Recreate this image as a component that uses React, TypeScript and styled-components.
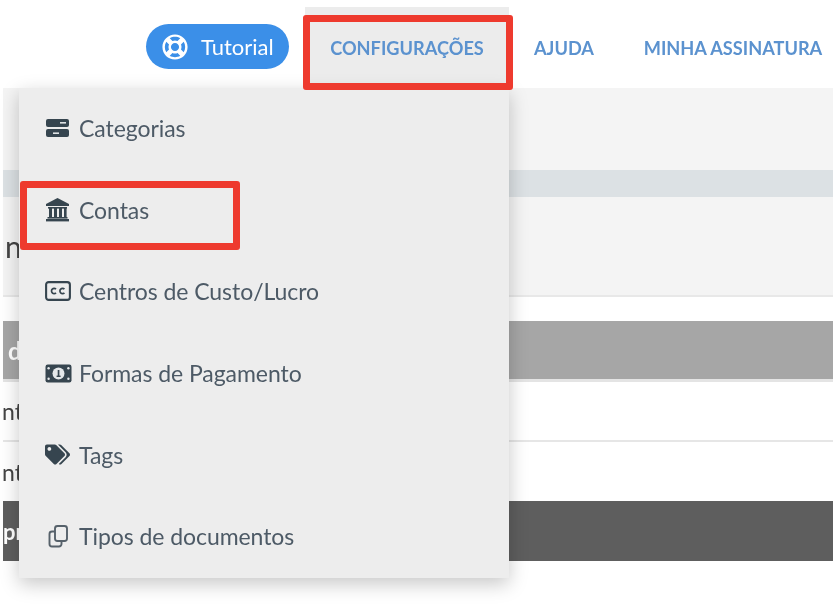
import React from 'react';
import styled, { createGlobalStyle } from 'styled-components';
import { FaTags, FaRegLifeRing } from 'react-icons/fa';

const Global = createGlobalStyle`
  html, body { margin: 0; padding: 0; background: #fff; }
  body { font-family: Lato, "Open Sans", sans-serif; }
`;

const Page = styled.div`
  position: relative;
  width: 839px;
  height: 604px;
  overflow: hidden;
  background: #fff;
  filter: blur(0.5px);
`;

const Nav = styled.nav`
  height: 88px;
  display: flex;
  align-items: flex-end;
  padding-left: 146px;
`;

const TutorialPill = styled.a`
  width: 143px;
  height: 45px;
  flex: none;
  margin-bottom: 19px;
  margin-right: 16px;
  border-radius: 23px;
  background: #3b8fe8;
  color: #fff;
  font-size: 22px;
  display: flex;
  align-items: center;
  box-sizing: border-box;
  padding-left: 16px;
  gap: 13px;
`;

const NavLink = styled.a<{ $active?: boolean; $width: number }>`
  width: ${p => p.$width}px;
  height: 81px;
  flex: none;
  display: flex;
  align-items: center;
  justify-content: center;
  background: ${p => (p.$active ? '#ececec' : 'transparent')};
  color: #5b92cf;
  font-size: 18.2px;
  font-weight: 700;
  white-space: nowrap;
`;

const Band = styled.div<{ $h: number; $bg: string; $line?: string; $lineW?: number }>`
  margin: 0 6px 0 3px;
  height: ${p => p.$h}px;
  background: ${p => p.$bg};
  box-sizing: border-box;
  border-bottom: ${p => (p.$line ? `${p.$lineW ?? 2}px solid ${p.$line}` : 'none')};
  display: flex;
  align-items: center;
  overflow: hidden;
`;

const Clip = styled.span<{ $light?: boolean; $left?: number; $size?: number }>`
  margin-left: ${p => p.$left ?? 0}px;
  font-size: ${p => p.$size ?? 24}px;
  font-weight: ${p => (p.$light ? 700 : 400)};
  color: ${p => (p.$light ? '#fff' : '#444')};
`;

const Menu = styled.ul`
  position: absolute;
  left: 19px;
  top: 88px;
  width: 490px;
  height: 490px;
  margin: 0;
  padding: 0;
  list-style: none;
  background: #ededed;
  box-shadow: 0 6px 18px rgba(0, 0, 0, 0.22);
  display: grid;
  grid-auto-rows: 81.6px;
`;

const MenuItem = styled.li`
  display: flex;
  align-items: center;
  padding-left: 26px;
  padding-bottom: 1px;
  color: #4d5a66;
  font-size: 23px;
  letter-spacing: -0.06px;
  white-space: nowrap;
`;

const IconSlot = styled.span`
  width: 34px;
  flex: none;
  display: flex;
  align-items: center;
  color: #36454f;
`;

const Annotation = styled.div<{ $l: number; $t: number; $w: number; $h: number }>`
  position: absolute;
  left: ${p => p.$l}px;
  top: ${p => p.$t}px;
  width: ${p => p.$w}px;
  height: ${p => p.$h}px;
  box-sizing: border-box;
  border: 7px solid #ee3a2e;
  border-radius: 3px;
`;

const SlabsIcon = () => (
  <svg width="25" height="20" viewBox="0 0 25 20">
    <rect x="1" y="1" width="23" height="8" rx="2" fill="currentColor" />
    <rect x="1" y="11" width="23" height="8" rx="2" fill="currentColor" />
    <rect x="15" y="4" width="6" height="1.6" fill="#dfe3e5" />
    <rect x="8" y="14.4" width="6" height="1.6" fill="#dfe3e5" />
  </svg>
);

const BankIcon = () => (
  <svg width="25" height="25" viewBox="0 0 25 25">
    <path d="M12.5 1 L24 7 V9 H1 V7 Z" fill="currentColor" />
    <rect x="3" y="10" width="19" height="1.6" fill="currentColor" />
    <rect x="4" y="11" width="3" height="9" fill="currentColor" />
    <rect x="9" y="11" width="3" height="9" fill="currentColor" />
    <rect x="14" y="11" width="3" height="9" fill="currentColor" />
    <rect x="19" y="11" width="2.6" height="9" fill="currentColor" />
    <rect x="2.5" y="20" width="20" height="1.6" fill="currentColor" />
    <rect x="1" y="22" width="23" height="2.4" fill="currentColor" />
  </svg>
);

const CaptionIcon = () => (
  <svg width="26" height="20" viewBox="0 0 26 20" fill="none" stroke="currentColor">
    <rect x="1.1" y="1.1" width="23.8" height="17.8" rx="2.6" strokeWidth="2.1" />
    <path d="M11 8.2 A2.6 2.6 0 1 0 11 11.8 M19.4 8.2 A2.6 2.6 0 1 0 19.4 11.8" strokeWidth="1.7" />
  </svg>
);

const BillIcon = () => (
  <svg width="27" height="19" viewBox="0 0 27 19">
    <rect x="0.5" y="0.5" width="26" height="18" rx="2.2" fill="currentColor" />
    <circle cx="13.5" cy="9.5" r="6" fill="#e4e7e9" />
    <rect x="12.7" y="6" width="1.7" height="6.5" fill="currentColor" />
    <rect x="11.6" y="11.6" width="4" height="1.4" fill="currentColor" />
    <circle cx="3.6" cy="4.2" r="1.2" fill="#e4e7e9" />
    <circle cx="3.6" cy="14.8" r="1.2" fill="#e4e7e9" />
    <circle cx="23.4" cy="4.2" r="1.2" fill="#e4e7e9" />
    <circle cx="23.4" cy="14.8" r="1.2" fill="#e4e7e9" />
  </svg>
);

const CopyIcon = () => (
  <svg width="24" height="24" viewBox="0 0 24 24" fill="none" stroke="#56616a" strokeWidth="1.9" style={{ marginLeft: 1 }}>
    <rect x="9" y="2" width="12" height="15" rx="2.5" />
    <path d="M9 7.5 H6 A2.5 2.5 0 0 0 3.5 10 V20 A2.5 2.5 0 0 0 6 22.5 H13 A2.5 2.5 0 0 0 15.5 20 V17" />
  </svg>
);

const items: [React.ReactNode, string][] = [
  [<SlabsIcon />, 'Categorias'],
  [<BankIcon />, 'Contas'],
  [<CaptionIcon />, 'Centros de Custo/Lucro'],
  [<BillIcon />, 'Formas de Pagamento'],
  [<FaTags size={25} />, 'Tags'],
  [<CopyIcon />, 'Tipos de documentos'],
];

export default function App() {
  return (
    <Page>
      <Global />
      <Nav>
        <TutorialPill><FaRegLifeRing size={26} />Tutorial</TutorialPill>
        <NavLink $active $width={204}>CONFIGURAÇÕES</NavLink>
        <NavLink $width={110}>AJUDA</NavLink>
        <NavLink $width={228}>MINHA ASSINATURA</NavLink>
      </Nav>
      <Band $h={82} $bg="#f4f4f4" />
      <Band $h={27} $bg="#dce1e4" />
      <Band $h={100} $bg="#f4f4f4" $line="#e8e8e8"><Clip $left={2} $size={30}>n</Clip></Band>
      <Band $h={24} $bg="#fff" />
      <Band $h={61} $bg="#a6a6a6" $line="#e4e4e4" $lineW={3}><Clip $light $left={5} $size={24}>d</Clip></Band>
      <Band $h={60} $bg="#fff" $line="#e6e6e6"><Clip $size={23} $left={-1}>nt</Clip></Band>
      <Band $h={59} $bg="#fff"><Clip $size={23} $left={-1}>nt</Clip></Band>
      <Band $h={60} $bg="#5e5e5e"><Clip $light $size={22} $left={0}>pr</Clip></Band>
      <Menu>
        {items.map(([icon, label]) => (
          <MenuItem key={label}><IconSlot>{icon}</IconSlot>{label}</MenuItem>
        ))}
      </Menu>
      <Annotation $l={303} $t={15} $w={210} $h={75} />
      <Annotation $l={20} $t={181} $w={220} $h={69} />
    </Page>
  );
}
